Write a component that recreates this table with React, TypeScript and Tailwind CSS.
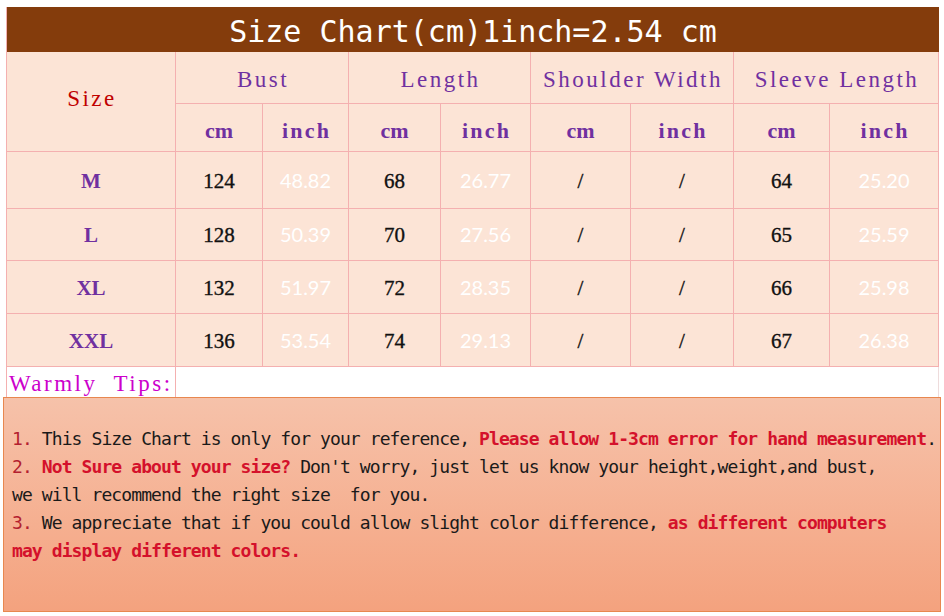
import React from "react";

const rows = [
  ["M", "124", "48.82", "68", "26.77", "64", "25.20"],
  ["L", "128", "50.39", "70", "27.56", "65", "25.59"],
  ["XL", "132", "51.97", "72", "28.35", "66", "25.98"],
  ["XXL", "136", "53.54", "74", "29.13", "67", "26.38"],
];

const cell = "flex items-center justify-center border-r border-b border-[#f4b0b0] bg-[#fce4d6]";
const serifF = "font-['Liberation_Serif','Times_New_Roman',serif]";
const numCls = `${cell} ${serifF} text-[#111] text-[21px] pt-[3px] [-webkit-text-stroke:0.35px_#111]`;
const inchCls = `${cell} font-['Lato','Open_Sans',sans-serif] text-white text-[20px] pb-[1px]`;

export default function App() {
  return (
    <div className="w-[944px] h-[616px] bg-white overflow-hidden">
      <div className="pt-[7px] pl-[6px]">
        <div className="grid w-[933px] border-l border-[#f4b0b0] grid-cols-[169px_87px_86px_92px_90px_100px_103px_96px_109px] grid-rows-[45px_52px_48px_57px_52px_53px_53px_30px]">
          <div className="col-span-9 flex items-center justify-center bg-[#843c0c] text-white text-[30px] leading-none pt-[4px] whitespace-pre font-['DejaVu_Sans_Mono',monospace]">
            Size Chart(cm)1inch=2.54 cm
          </div>
          <div className={`${cell} ${serifF} row-span-2 text-[#c00000] text-[23px] tracking-[2.5px] pl-[2px] pb-[4px]`}>
            Size
          </div>
          {["Bust", "Length", "Shoulder Width", "Sleeve Length"].map((h) => (
            <div
              key={h}
              className={`${cell} ${serifF} col-span-2 text-[#7030a0] text-[23px] tracking-[2.5px] pl-[2px] pt-[6px] whitespace-pre`}
            >
              {h}
            </div>
          ))}
          {[0, 1, 2, 3].flatMap((i) => [
            <div key={`c${i}`} className={`${cell} ${serifF} text-[#7030a0] text-[22px] font-bold pt-[6px]`}>
              cm
            </div>,
            <div key={`i${i}`} className={`${cell} ${serifF} text-[#7030a0] text-[22px] font-bold tracking-[2.2px] pl-[2px] pt-[6px]`}>
              inch
            </div>,
          ])}
          {rows.map((r) => [
            <div key={r[0]} className={`${cell} ${serifF} text-[#7030a0] text-[21px] font-bold pt-[3px]`}>
              {r[0]}
            </div>,
            <div key={r[0] + "b"} className={numCls}>
              {r[1]}
            </div>,
            <div key={r[0] + "bi"} className={inchCls}>
              {r[2]}
            </div>,
            <div key={r[0] + "l"} className={numCls}>
              {r[3]}
            </div>,
            <div key={r[0] + "li"} className={inchCls}>
              {r[4]}
            </div>,
            <div key={r[0] + "s"} className={numCls}>
              /
            </div>,
            <div key={r[0] + "si"} className={numCls}>
              /
            </div>,
            <div key={r[0] + "sl"} className={numCls}>
              {r[5]}
            </div>,
            <div key={r[0] + "sli"} className={inchCls}>
              {r[6]}
            </div>,
          ])}
          <div className={`flex items-start border-r border-[#f4b0b0] bg-white pl-[2px] ${serifF} text-[#cc00cc] text-[23px] tracking-[2.5px] leading-[34px] whitespace-pre`}>
            Warmly  Tips:
          </div>
          <div className="col-span-8 bg-white border-r border-[#eedcdc]" />
        </div>
      </div>
      <div className="ml-[3px] w-[938px] h-[215px] border border-[#e8874f] bg-gradient-to-b from-[#f6c2aa] to-[#f4a27e] pt-[27px] pl-[8px] text-[18px] tracking-[-0.9px] leading-[28px] text-[#1a1a1a] whitespace-pre font-['DejaVu_Sans_Mono',monospace]">
        <div>
          <span className="text-[#b3202f]">1.</span> This Size Chart is only for your reference,{" "}
          <span className="text-[#d4112b] font-bold">Please allow 1-3cm error for hand measurement</span>.
        </div>
        <div>
          <span className="text-[#b3202f]">2.</span>{" "}
          <span className="text-[#d4112b] font-bold">Not Sure about your size?</span> Don't worry, just let us know your height,weight,and bust,
        </div>
        <div>we will recommend the right size  for you.</div>
        <div>
          <span className="text-[#b3202f]">3.</span> We appreciate that if you could allow slight color difference,{" "}
          <span className="text-[#d4112b] font-bold">as different computers</span>
        </div>
        <div className="text-[#d4112b] font-bold">may display different colors.</div>
      </div>
    </div>
  );
}
